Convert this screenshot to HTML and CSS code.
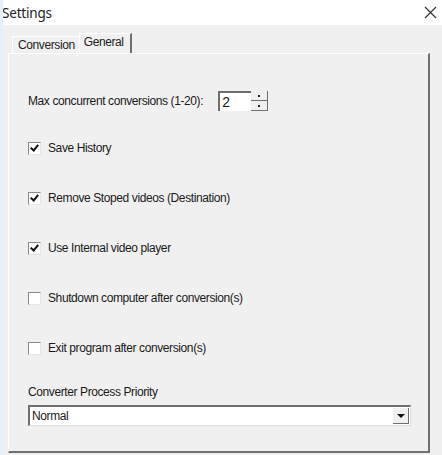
FILE: index.html
```html
<!DOCTYPE html>
<html lang="en">
<head>
    <meta charset="UTF-8">
    <title>Settings</title>
    <link rel="stylesheet" href="styles.css">
</head>
<body>
    <div class="window">
        <div class="title-bar">
            <span class="title">Settings</span>
            <svg class="close" width="13" height="13" viewBox="0 0 13 13">
                <path d="M1 1 L12 12 M12 1 L1 12" stroke="#333" stroke-width="1.2" fill="none"/>
            </svg>
        </div>
        <div class="client">
            <div class="tabs">
                <div class="tab">Conversion</div>
                <div class="tab active">General</div>
            </div>
            <div class="panel">
                <div class="row spin-row">
                    <span>Max concurrent conversions (1-20):</span>
                    <div class="spin">
                        <div class="spin-input">2</div>
                        <div class="spin-buttons">
                            <div class="spin-btn"><span class="dot"></span></div>
                            <div class="spin-btn"><span class="dot"></span></div>
                        </div>
                    </div>
                </div>
                <label class="check-row"><span class="box checked"></span>Save History</label>
                <label class="check-row"><span class="box checked"></span>Remove Stoped videos (Destination)</label>
                <label class="check-row"><span class="box checked"></span>Use Internal video player</label>
                <label class="check-row"><span class="box"></span>Shutdown computer after conversion(s)</label>
                <label class="check-row"><span class="box"></span>Exit program after conversion(s)</label>
                <div class="priority">
                    <div class="priority-label">Converter Process Priority</div>
                    <div class="combo">
                        <span class="combo-text">Normal</span>
                        <span class="combo-btn"><span class="arrow"></span></span>
                    </div>
                </div>
            </div>
        </div>
    </div>
</body>
</html>
```
FILE: styles.css
```css
/* Window frame */
body {
    margin: 0;
    padding: 0;
    font-family: 'Liberation Sans', Arial, sans-serif;
    font-size: 12px;
    letter-spacing: -0.4px;
    color: #1a1a1a;
    background: #f0f0f0;
}

.window {
    width: 442px;
    height: 455px;
    overflow: hidden;
    background: #f0f0f0;
    border-left: 3px solid #e3f1fb;
    box-sizing: border-box;
}

.title-bar {
    height: 25px;
    background: #ffffff;
    display: flex;
    align-items: center;
    justify-content: space-between;
    padding: 0 5px 0 0;
    margin-left: -3px;
}

.title {
    font-family: 'Noto Sans', 'Liberation Sans', sans-serif;
    font-size: 13.5px;
    letter-spacing: -0.2px;
    color: #222;
    padding-left: 2px;
}

/* Tabs */
.client {
    padding: 9px 0 0 5px;
}

.tabs {
    display: flex;
    align-items: flex-end;
    padding-left: 4px;
    height: 19px;
}

.tab {
    height: 16px;
    line-height: 16px;
    padding: 0 4px 0 5px;
    border-top: 1px solid #ffffff;
    border-left: 1px solid #ffffff;
    color: #222;
}

.tab.active {
    height: 19px;
    line-height: 17px;
    border-right: 2px solid #6f6f6f;
    padding: 0 6px 0 4px;
}

.panel {
    width: 422px;
    height: 400px;
    box-sizing: border-box;
    border-top: 1px solid #ffffff;
    border-left: 1px solid #ffffff;
    border-right: 2px solid #6f6f6f;
    border-bottom: 2px solid #6f6f6f;
    padding: 37px 0 0 19px;
}

/* Rows */
.spin-row {
    display: flex;
    align-items: center;
    height: 20px;
    gap: 15px;
}

.spin {
    display: flex;
}

.spin-input {
    width: 33px;
    height: 20px;
    box-sizing: border-box;
    background: #ffffff;
    border-top: 2px solid #6f6f6f;
    border-left: 2px solid #6f6f6f;
    padding-left: 2px;
    font-size: 14px;
    line-height: 18px;
}

.spin-buttons {
    display: flex;
    flex-direction: column;
    width: 17px;
}

.spin-btn {
    height: 10px;
    box-sizing: border-box;
    border-right: 1px solid #6f6f6f;
    border-bottom: 1px solid #6f6f6f;
    background: #f0f0f0;
    display: flex;
    align-items: center;
    justify-content: center;
}

.dot {
    width: 2px;
    height: 2px;
    background: #222;
}

.check-row {
    display: flex;
    align-items: center;
    height: 16px;
    margin-top: 34px;
    gap: 7px;
}

.spin-row + .check-row {
    margin-top: 29px;
}

.box {
    width: 13px;
    height: 13px;
    box-sizing: border-box;
    background: #ffffff;
    border-top: 1px solid #8a8a8a;
    border-left: 1px solid #8a8a8a;
    border-right: 1px solid #e6e6e6;
    border-bottom: 1px solid #e6e6e6;
    position: relative;
}

.box.checked::after {
    content: "";
    position: absolute;
    left: 3px;
    top: 0px;
    width: 3px;
    height: 6px;
    border-right: 2px solid #111;
    border-bottom: 2px solid #111;
    transform: rotate(40deg);
}

/* Priority combo */
.priority {
    margin-top: 28px;
}

.priority-label {
    height: 16px;
    line-height: 16px;
}

.combo {
    margin-top: 5px;
    width: 383px;
    height: 21px;
    box-sizing: border-box;
    background: #ffffff;
    border-top: 2px solid #6f6f6f;
    border-left: 2px solid #6f6f6f;
    border-right: 1px solid #dcdcdc;
    border-bottom: 1px solid #dcdcdc;
    display: flex;
    align-items: center;
    justify-content: space-between;
}

.combo-text {
    padding-left: 2px;
}

.combo-btn {
    width: 16px;
    height: 16px;
    margin-right: 1px;
    box-sizing: border-box;
    background: #f0f0f0;
    border-right: 1px solid #6f6f6f;
    border-bottom: 1px solid #6f6f6f;
    display: flex;
    align-items: center;
    justify-content: center;
}

.arrow {
    width: 0;
    height: 0;
    border-left: 4px solid transparent;
    border-right: 4px solid transparent;
    border-top: 4px solid #111;
}
```
